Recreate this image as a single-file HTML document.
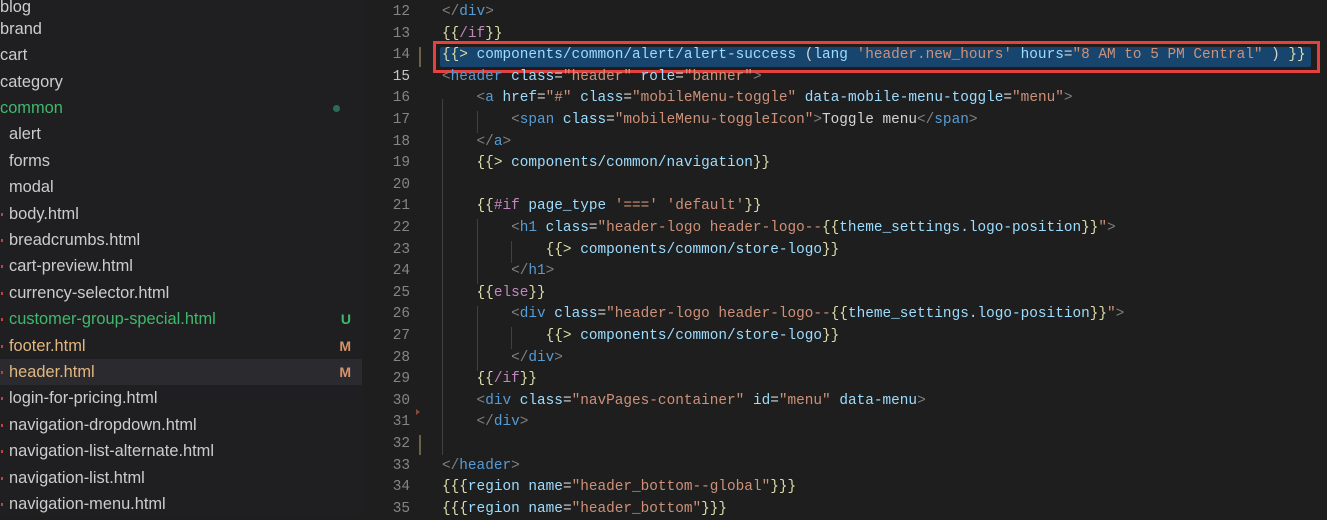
<!DOCTYPE html>
<html><head><meta charset="utf-8"><style>
body{margin:0;width:1327px;height:517px;overflow:hidden;background:#1e1e1e;position:relative}
#side{position:absolute;left:0;top:2px;width:362px;height:517px;background:#1f1f21;font-family:"Liberation Sans",sans-serif;font-size:16.4px;color:#cccccc}
.r{position:absolute;left:0;width:362px;height:26px;line-height:26px;white-space:nowrap}
.r .b{position:absolute;right:20px;top:0;font-weight:bold;font-size:14px}
.mk{position:absolute;left:1px;top:12px;width:2px;height:3px;background:#c74040}
#ed{position:absolute;left:362px;top:3px;width:965px;height:517px;font-family:"Liberation Mono",monospace;font-size:14.4px}
.l{position:absolute;left:0;height:21.6px;line-height:21.6px;white-space:pre;width:965px}
.n{position:absolute;left:0;width:48px;text-align:right;color:#858585}
.c{position:absolute;left:80px;color:#d4d4d4}
.g{color:#808080}.t{color:#569cd6}.a{color:#9cdcfe}.s{color:#ce9178}.y{color:#dcdcaa}.p{color:#c586c0}.w{color:#d4d4d4}
.ig{position:absolute;width:1px;background:#404040}
</style></head><body>
<div id="side" style="top:0">
<div style="position:absolute;left:0;top:2px;width:362px;height:517px">
<div class="r" style="top:-8px">blog</div>
<div class="r" style="top:14px">brand</div>
<div class="r" style="top:40px">cart</div>
<div class="r" style="top:67px">category</div>
<div class="r" style="top:93px;color:#3fb96b">common<span style="position:absolute;left:333px;top:10px;width:7px;height:7px;border-radius:50%;background:#2e6b55"></span></div>
<div class="r" style="top:119px;padding-left:9px">alert</div>
<div class="r" style="top:146px;padding-left:9px">forms</div>
<div class="r" style="top:172px;padding-left:9px">modal</div>
<div class="r" style="top:199px;padding-left:9px"><i class="mk"></i>body.html</div>
<div class="r" style="top:225px;padding-left:9px"><i class="mk"></i>breadcrumbs.html</div>
<div class="r" style="top:251px;padding-left:9px"><i class="mk"></i>cart-preview.html</div>
<div class="r" style="top:278px;padding-left:9px"><i class="mk"></i>currency-selector.html</div>
<div class="r" style="top:304px;padding-left:9px;color:#3fb96b"><i class="mk"></i>customer-group-special.html<span class="b" style="color:#3fb96b;right:20px">U</span></div>
<div class="r" style="top:331px;padding-left:9px;color:#e2b77f"><i class="mk"></i>footer.html<span class="b" style="color:#d6926b;right:20px">M</span></div>
<div class="r" style="top:357px;padding-left:9px;color:#e2b77f;background:#2b2b2f;width:353px"><i class="mk"></i>header.html<span class="b" style="color:#d6926b;right:11px">M</span></div>
<div class="r" style="top:383px;padding-left:9px"><i class="mk"></i>login-for-pricing.html</div>
<div class="r" style="top:410px;padding-left:9px"><i class="mk"></i>navigation-dropdown.html</div>
<div class="r" style="top:436px;padding-left:9px"><i class="mk"></i>navigation-list-alternate.html</div>
<div class="r" style="top:463px;padding-left:9px"><i class="mk"></i>navigation-list.html</div>
<div class="r" style="top:489px;padding-left:9px"><i class="mk"></i>navigation-menu.html</div>
</div>
</div>
<div id="ed">
<div class="ig" style="left:80px;top:96px;height:356px"></div>
<div class="ig" style="left:115px;top:108px;height:22px"></div>
<div class="ig" style="left:115px;top:216px;height:65px"></div>
<div class="ig" style="left:115px;top:303px;height:65px"></div>
<div class="ig" style="left:149px;top:238px;height:22px"></div>
<div class="ig" style="left:149px;top:324px;height:22px"></div>
<div style="position:absolute;left:57px;top:44px;width:2px;height:20px;background:#6b6048"></div>
<div style="position:absolute;left:57px;top:432px;width:2px;height:20px;background:#6b6048"></div>
<div style="position:absolute;left:54px;top:406px;width:0;height:0;border-left:4px solid #8a4a3a;border-top:3px solid transparent;border-bottom:3px solid transparent"></div>
<div style="position:absolute;left:78px;top:44px;width:871px;height:20px;background:#17456d;border-radius:2px"></div>
<div style="position:absolute;left:71px;top:38px;width:881px;height:26px;border:3px solid #e5413f"></div>

<div class="l" style="top:-1px"><span class="n">12</span><span class="c"><span class="g">&lt;/</span><span class="t">div</span><span class="g">&gt;</span></span></div>
<div class="l" style="top:20.6px"><span class="n">13</span><span class="c"><span class="y">{{</span><span class="p">/if</span><span class="y">}}</span></span></div>
<div class="l" style="top:42.2px"><span class="n">14</span><span class="c"><span class="y">{{&gt;</span> <span class="a">components/common/alert/alert-success</span> <span class="w">(</span><span class="a">lang</span> <span class="s">'header.new_hours'</span> <span class="a">hours</span><span class="w">=</span><span class="s">"8 AM to 5 PM Central"</span> <span class="w">)</span> <span class="y">}}</span></span></div>
<div class="l" style="top:63.8px"><span class="n" style="color:#c6c6c6">15</span><span class="c"><span class="g">&lt;</span><span class="t">header</span> <span class="a">class</span>=<span class="s">"header"</span> <span class="a">role</span>=<span class="s">"banner"</span><span class="g">&gt;</span></span></div>
<div class="l" style="top:85.4px"><span class="n">16</span><span class="c">    <span class="g">&lt;</span><span class="t">a</span> <span class="a">href</span>=<span class="s">"#"</span> <span class="a">class</span>=<span class="s">"mobileMenu-toggle"</span> <span class="a">data-mobile-menu-toggle</span>=<span class="s">"menu"</span><span class="g">&gt;</span></span></div>
<div class="l" style="top:107px"><span class="n">17</span><span class="c">        <span class="g">&lt;</span><span class="t">span</span> <span class="a">class</span>=<span class="s">"mobileMenu-toggleIcon"</span><span class="g">&gt;</span>Toggle menu<span class="g">&lt;/</span><span class="t">span</span><span class="g">&gt;</span></span></div>
<div class="l" style="top:128.6px"><span class="n">18</span><span class="c">    <span class="g">&lt;/</span><span class="t">a</span><span class="g">&gt;</span></span></div>
<div class="l" style="top:150.2px"><span class="n">19</span><span class="c">    <span class="y">{{&gt;</span> <span class="a">components/common/navigation</span><span class="y">}}</span></span></div>
<div class="l" style="top:171.8px"><span class="n">20</span></div>
<div class="l" style="top:193.4px"><span class="n">21</span><span class="c">    <span class="y">{{</span><span class="p">#if</span> <span class="a">page_type</span> <span class="s">'==='</span> <span class="s">'default'</span><span class="y">}}</span></span></div>
<div class="l" style="top:215px"><span class="n">22</span><span class="c">        <span class="g">&lt;</span><span class="t">h1</span> <span class="a">class</span>=<span class="s">"header-logo header-logo--</span><span class="y">{{</span><span class="a">theme_settings.logo-position</span><span class="y">}}</span><span class="s">"</span><span class="g">&gt;</span></span></div>
<div class="l" style="top:236.6px"><span class="n">23</span><span class="c">            <span class="y">{{&gt;</span> <span class="a">components/common/store-logo</span><span class="y">}}</span></span></div>
<div class="l" style="top:258.2px"><span class="n">24</span><span class="c">        <span class="g">&lt;/</span><span class="t">h1</span><span class="g">&gt;</span></span></div>
<div class="l" style="top:279.8px"><span class="n">25</span><span class="c">    <span class="y">{{</span><span class="p">else</span><span class="y">}}</span></span></div>
<div class="l" style="top:301.4px"><span class="n">26</span><span class="c">        <span class="g">&lt;</span><span class="t">div</span> <span class="a">class</span>=<span class="s">"header-logo header-logo--</span><span class="y">{{</span><span class="a">theme_settings.logo-position</span><span class="y">}}</span><span class="s">"</span><span class="g">&gt;</span></span></div>
<div class="l" style="top:323px"><span class="n">27</span><span class="c">            <span class="y">{{&gt;</span> <span class="a">components/common/store-logo</span><span class="y">}}</span></span></div>
<div class="l" style="top:344.6px"><span class="n">28</span><span class="c">        <span class="g">&lt;/</span><span class="t">div</span><span class="g">&gt;</span></span></div>
<div class="l" style="top:366.2px"><span class="n">29</span><span class="c">    <span class="y">{{</span><span class="p">/if</span><span class="y">}}</span></span></div>
<div class="l" style="top:387.8px"><span class="n">30</span><span class="c">    <span class="g">&lt;</span><span class="t">div</span> <span class="a">class</span>=<span class="s">"navPages-container"</span> <span class="a">id</span>=<span class="s">"menu"</span> <span class="a">data-menu</span><span class="g">&gt;</span></span></div>
<div class="l" style="top:409.4px"><span class="n">31</span><span class="c">    <span class="g">&lt;/</span><span class="t">div</span><span class="g">&gt;</span></span></div>
<div class="l" style="top:431px"><span class="n">32</span></div>
<div class="l" style="top:452.6px"><span class="n">33</span><span class="c"><span class="g">&lt;/</span><span class="t">header</span><span class="g">&gt;</span></span></div>
<div class="l" style="top:474.2px"><span class="n">34</span><span class="c"><span class="y">{{{</span><span class="a">region</span> <span class="a">name</span>=<span class="s">"header_bottom--global"</span><span class="y">}}}</span></span></div>
<div class="l" style="top:495.8px"><span class="n">35</span><span class="c"><span class="y">{{{</span><span class="a">region</span> <span class="a">name</span>=<span class="s">"header_bottom"</span><span class="y">}}}</span></span></div>
</div>
</body></html>
